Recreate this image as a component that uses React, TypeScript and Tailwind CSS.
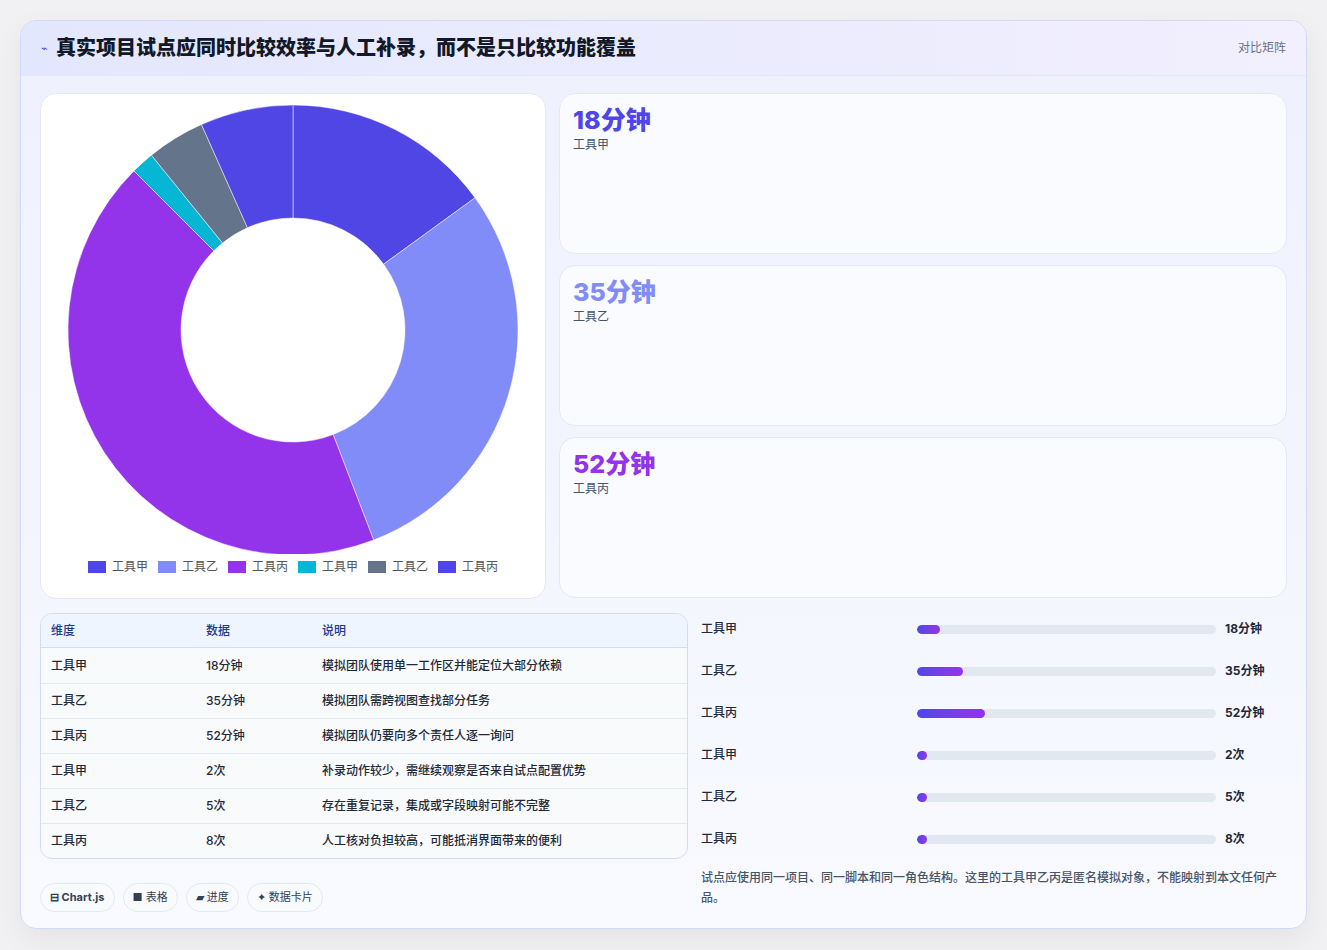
import React from "react";

const data = [18, 35, 52, 2, 5, 8];
const colors = ["#4f46e5", "#818cf8", "#9333ea", "#06b6d4", "#64748b", "#4f46e5"];
const labels = ["工具甲", "工具乙", "工具丙", "工具甲", "工具乙", "工具丙"];

function Donut() {
  const cx = 252, cy = 236, R = 225, r = 112;
  const total = data.reduce((a, b) => a + b, 0);
  let a0 = -Math.PI / 2;
  const paths = data.map((v, i) => {
    const a1 = a0 + (v / total) * Math.PI * 2;
    const large = a1 - a0 > Math.PI ? 1 : 0;
    const p = (rad: number, a: number) => `${cx + rad * Math.cos(a)} ${cy + rad * Math.sin(a)}`;
    const d = `M ${p(R, a0)} A ${R} ${R} 0 ${large} 1 ${p(R, a1)} L ${p(r, a1)} A ${r} ${r} 0 ${large} 0 ${p(r, a0)} Z`;
    a0 = a1;
    return <path key={i} d={d} fill={colors[i]} stroke="#fff" strokeWidth={0.5} />;
  });
  return (
    <svg width={504} height={460} viewBox="0 0 504 460">
      {paths}
    </svg>
  );
}

const rows = [
  ["工具甲", "18分钟", "模拟团队使用单一工作区并能定位大部分依赖"],
  ["工具乙", "35分钟", "模拟团队需跨视图查找部分任务"],
  ["工具丙", "52分钟", "模拟团队仍要向多个责任人逐一询问"],
  ["工具甲", "2次", "补录动作较少，需继续观察是否来自试点配置优势"],
  ["工具乙", "5次", "存在重复记录，集成或字段映射可能不完整"],
  ["工具丙", "8次", "人工核对负担较高，可能抵消界面带来的便利"],
];

const bars = [
  ["工具甲", 18, "18分钟"],
  ["工具乙", 35, "35分钟"],
  ["工具丙", 52, "52分钟"],
  ["工具甲", 2, "2次"],
  ["工具乙", 5, "5次"],
  ["工具丙", 8, "8次"],
] as const;

export default function App() {
  return (
    <div className="min-h-[950px] bg-[#f1f1f3] pt-5 px-5" style={{ fontFamily: "Inter, 'Noto Sans CJK SC', sans-serif" }}>
      <div className="w-[1287px] h-[909px] rounded-2xl border border-[#d4d9f5] bg-gradient-to-b from-[#eef0fd] to-[#f8faff] overflow-hidden shadow-[0_10px_30px_rgba(0,0,0,0.06)]">
        <div className="h-[55px] flex items-center justify-between px-5 bg-gradient-to-r from-[#e3e7fd] to-[#f2effe] border-b border-[#e2e6f6]">
          <div className="flex items-center gap-2">
            <span className="text-[#4f46e5] text-[11px]">⌁</span>
            <span className="text-[20px] font-extrabold text-[#111827]">真实项目试点应同时比较效率与人工补录，而不是只比较功能覆盖</span>
          </div>
          <span className="text-[12px] text-[#64748b]">对比矩阵</span>
        </div>
        <div className="px-[19px] pt-[17px]">
          <div className="flex gap-[13px]">
            <div className="w-[506px] h-[506px] bg-white rounded-2xl border border-[#e5e8f3] flex flex-col items-center pt-0">
              <Donut />
              <div className="flex gap-[10px] text-[12px] text-[#555] mt-[4px]">
                {labels.map((l, i) => (
                  <div key={i} className="flex items-center gap-[6px]">
                    <span className="w-[18px] h-[12px]" style={{ background: colors[i] }} />
                    {l}
                  </div>
                ))}
              </div>
            </div>
            <div className="flex-1 flex flex-col gap-[11px]">
              {[["18分钟", "工具甲", "text-[#4f46e5]"], ["35分钟", "工具乙", "text-[#818cf8]"], ["52分钟", "工具丙", "text-[#9333ea]"]].map(([v, l, c], i) => (
                <div key={i} className="h-[161px] rounded-2xl border border-[#e5e8f3] bg-[#fafbff] px-[13px] pt-[10px]">
                  <div className={`text-[25px] font-extrabold leading-[32px] ${c}`}>{v}</div>
                  <div className="text-[12px] text-[#475569]">{l}</div>
                </div>
              ))}
            </div>
          </div>
          <div className="flex gap-[13px] mt-[14px]">
            <div className="w-[648px]">
              <div className="rounded-xl border border-[#d4dcea] overflow-hidden bg-[#f8fafc] text-[12px] font-medium">
                <div className="flex h-[34px] items-center bg-[#eef5fe] text-[#1e3a8a] border-b border-[#d4dcea]">
                  <div className="w-[165px] pl-[10px]">维度</div>
                  <div className="w-[116px]">数据</div>
                  <div>说明</div>
                </div>
                {rows.map((r, i) => (
                  <div key={i} className={`flex h-[35px] items-center text-[#1f2937] ${i ? "border-t border-[#e2e8f0]" : ""}`}>
                    <div className="w-[165px] pl-[10px]">{r[0]}</div>
                    <div className="w-[116px]">{r[1]}</div>
                    <div>{r[2]}</div>
                  </div>
                ))}
              </div>
              <div className="flex gap-[8px] mt-[24px] text-[11px] text-[#334155]">
                {["⊟ Chart.js", "■ 表格", "▰ 进度", "✦ 数据卡片"].map((t, i) => (
                  <span key={i} className={`h-[29px] px-[9px] flex items-center rounded-full border border-[#e2e8f0] bg-[#f8fafc] ${i === 0 ? "font-bold" : ""}`}>{t}</span>
                ))}
              </div>
            </div>
            <div className="flex-1 -mt-[5px]">
              {bars.map(([l, v, t], i) => (
                <div key={i} className="flex items-center h-[42px] text-[12px] text-[#1f2937] font-medium">
                  <div className="w-[216px]">{l}</div>
                  <div className="w-[299px] h-[9px] bg-[#e2e8f0] rounded-full overflow-hidden">
                    <div className="h-full rounded-full bg-gradient-to-r from-[#4f46e5] to-[#9333ea] min-w-[10px]" style={{ width: `${(v / 230) * 100}%` }} />
                  </div>
                  <div className="pl-[9px] font-bold">{t}</div>
                </div>
              ))}
              <div className="text-[12px] text-[#475569] leading-[20px] mt-[8px] font-medium">
                试点应使用同一项目、同一脚本和同一角色结构。这里的工具甲乙丙是匿名模拟对象，不能映射到本文任何产品。
              </div>
            </div>
          </div>
        </div>
      </div>
    </div>
  );
}
